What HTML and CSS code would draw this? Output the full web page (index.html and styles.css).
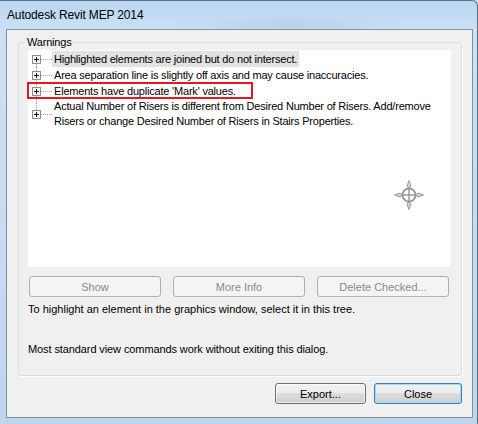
FILE: index.html
```html
<!DOCTYPE html>
<html>
<head>
<meta charset="utf-8">
<link rel="stylesheet" href="styles.css">
</head>
<body>
<div class="window">
  <div class="titlebar">Autodesk Revit MEP 2014</div>
  <div class="client">
    <fieldset class="group">
      <legend>Warnings</legend>
      <div class="group-body">
        <div class="tree">
          <div class="row first">
            <div class="gutter"><svg class="plus" width="9" height="9" viewBox="0 0 9 9"><rect x="0.5" y="0.5" width="8" height="8" fill="#f7f7f7" stroke="#8e8f8f"/><path d="M2 4.5h5M4.5 2v5" stroke="#1a1a1a"/></svg></div>
            <div class="label selected">Highlighted elements are joined but do not intersect.</div>
          </div>
          <div class="row">
            <div class="gutter"><svg class="plus" width="9" height="9" viewBox="0 0 9 9"><rect x="0.5" y="0.5" width="8" height="8" fill="#f7f7f7" stroke="#8e8f8f"/><path d="M2 4.5h5M4.5 2v5" stroke="#1a1a1a"/></svg></div>
            <div class="label">Area separation line is slightly off axis and may cause inaccuracies.</div>
          </div>
          <div class="row">
            <div class="gutter"><svg class="plus" width="9" height="9" viewBox="0 0 9 9"><rect x="0.5" y="0.5" width="8" height="8" fill="#f7f7f7" stroke="#8e8f8f"/><path d="M2 4.5h5M4.5 2v5" stroke="#1a1a1a"/></svg></div>
            <div class="label">Elements have duplicate 'Mark' values.</div>
          </div>
          <div class="row last tall">
            <div class="gutter"><svg class="plus" width="9" height="9" viewBox="0 0 9 9"><rect x="0.5" y="0.5" width="8" height="8" fill="#f7f7f7" stroke="#8e8f8f"/><path d="M2 4.5h5M4.5 2v5" stroke="#1a1a1a"/></svg></div>
            <div class="label">Actual Number of Risers is different from Desired Number of Risers. Add/remove<br>Risers or change Desired Number of Risers in Stairs Properties.</div>
          </div>
          <div class="callout"></div>
          <svg class="compass" width="34" height="34" viewBox="0 0 34 34">
            <g fill="#d4d4d4" stroke="#9a9a9a" stroke-width="1">
              <path d="M17 2.5 L19 8 L17 10.5 L15 8 Z"/>
              <path d="M17 31.5 L19 26 L17 23.5 L15 26 Z"/>
              <path d="M2.5 17 L8 15 L10.5 17 L8 19 Z"/>
              <path d="M31.5 17 L26 15 L23.5 17 L26 19 Z"/>
            </g>
            <circle cx="17" cy="17" r="6.5" fill="#fff" stroke="#9a9a9a" stroke-width="2"/>
            <path d="M17 11v12M11 17h12" stroke="#9a9a9a" stroke-width="1.5"/>
          </svg>
        </div>
        <div class="actions">
          <button class="btn" disabled>Show</button>
          <button class="btn" disabled>More Info</button>
          <button class="btn" disabled>Delete Checked...</button>
        </div>
        <p class="hint">To highlight an element in the graphics window, select it in this tree.</p>
        <p class="hint second">Most standard view commands work without exiting this dialog.</p>
      </div>
    </fieldset>
    <div class="footer">
      <button class="btn push export">Export...</button>
      <button class="btn push default">Close</button>
    </div>
  </div>
</div>
</body>
</html>
```
FILE: styles.css
```css
html, body {
  margin: 0;
  padding: 0;
}
body {
  font-family: "Liberation Sans", Arial, sans-serif;
  font-size: 11px;
  color: #000;
  background: #c4dcf3;
}
.window {
  width: 478px;
  height: 424px;
  box-sizing: border-box;
  border-top: 1px solid #5f7080;
  border-right: 1px solid #5f7080;
  border-top-right-radius: 6px;
  background:
    radial-gradient(ellipse 120px 10px at 290px 24px, rgba(120, 150, 185, 0.18), rgba(120, 150, 185, 0) 100%),
    linear-gradient(to bottom, #b9d5ef 0px, #c9e1f7 28px, #c6def4 200px, #bcd6ef 424px);
  padding: 0 4px 0 6px;
  display: flex;
  flex-direction: column;
  overflow: hidden;
}
.titlebar {
  height: 28px;
  flex: none;
  display: flex;
  align-items: center;
  padding-left: 1px;
  font-size: 12px;
  letter-spacing: -0.15px;
}
.client {
  height: 389px;
  flex: none;
  box-sizing: border-box;
  background: #f0f0f0;
  border: 1px solid #838f9b;
  display: flex;
  flex-direction: column;
}
.group {
  margin: 5px 10px 0 11px;
  padding: 0;
  border: 1px solid #d5dfe5;
  border-radius: 3px;
  box-shadow: 1px 1px 0 #fff;
  min-width: 0;
}
.group legend {
  margin-left: 6px;
  padding: 0 2px;
  line-height: 14px;
  font-size: 11px;
  letter-spacing: -0.2px;
}
.group-body {
  padding: 1px 10px 19px 9px;
}
.tree {
  position: relative;
  height: 217px;
  box-sizing: border-box;
  padding-top: 1px;
  background: #fff;
}
.row {
  display: flex;
  align-items: stretch;
  letter-spacing: -0.2px;
}
.gutter {
  position: relative;
  width: 24px;
  flex: none;
  display: flex;
  align-items: center;
}
.gutter::before {
  content: "";
  position: absolute;
  left: 8px;
  top: 0;
  bottom: 0;
  border-left: 1px dotted #a0a0a0;
}
.row.first .gutter::before { top: 50%; }
.row.last .gutter::before { bottom: 50%; }
.gutter::after {
  content: "";
  position: absolute;
  left: 13px;
  width: 11px;
  top: 50%;
  border-top: 1px dotted #a0a0a0;
}
.plus {
  position: relative;
  z-index: 1;
  margin-left: 4px;
  display: block;
}
.label {
  padding: 0 2px;
  line-height: 16px;
}
.row.tall .label {
  line-height: 15px;
}
.label.selected {
  background: #e2e2e2;
}
.callout {
  position: absolute;
  left: -1px;
  top: 32px;
  width: 226px;
  height: 17px;
  box-sizing: border-box;
  border: 2px solid #e8161f;
}
.compass {
  position: absolute;
  left: 364px;
  top: 128px;
}
.actions {
  display: flex;
  gap: 12px;
  margin-top: 9px;
  padding-left: 1px;
}
.btn {
  width: 132px;
  height: 21px;
  box-sizing: border-box;
  padding: 0;
  font-family: "Liberation Sans", Arial, sans-serif;
  font-size: 11px;
  border: 1px solid #adb2b5;
  border-radius: 3px;
  background: #f4f4f4;
  color: #8b8b8b;
}
.hint {
  margin: 5px 0 0 0;
  line-height: 14px;
  letter-spacing: 0;
}
.hint.second {
  margin-top: 26px;
  letter-spacing: -0.1px;
}
.footer {
  display: flex;
  justify-content: flex-end;
  gap: 8px;
  margin-top: 7px;
  padding-right: 10px;
}
.push {
  color: #000;
  border-color: #707070;
  background: linear-gradient(to bottom, #f2f2f2 0%, #ebebeb 50%, #dddddd 50%, #cfcfcf 100%);
  box-shadow: inset 0 0 0 1px rgba(255, 255, 255, 0.6);
}
.export {
  width: 91px;
}
.default {
  width: 88px;
  border-color: #3c7fb1;
  box-shadow: inset 0 0 0 1px #9fdcf6;
}
```
